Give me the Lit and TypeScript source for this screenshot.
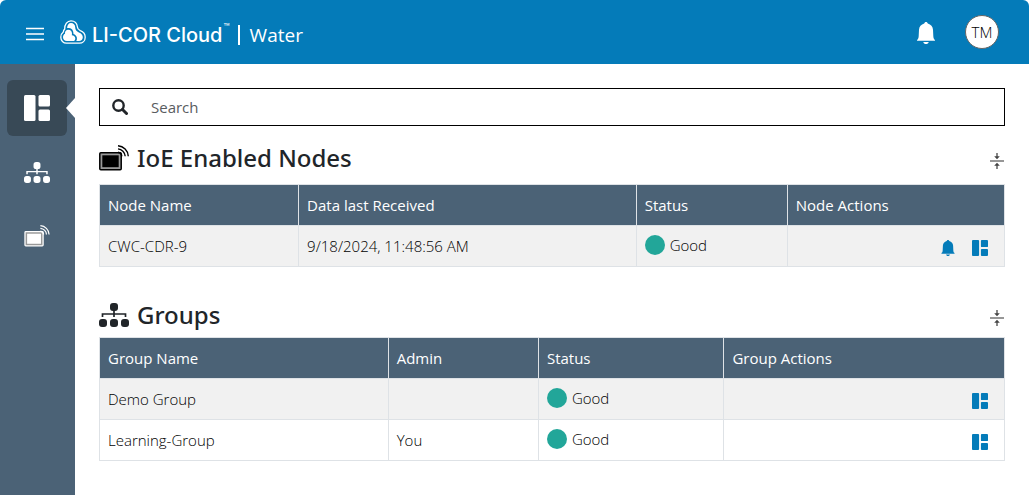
import { LitElement, html, css, svg, nothing, TemplateResult } from "lit";
import { customElement, property } from "lit/decorators.js";

type IconName = "menu" | "bell" | "dashboard" | "sitemap" | "device" | "search" | "collapse" | "cloud";

const shapes: Record<IconName, { box: string; body: TemplateResult }> = {
  menu: {
    box: "0 0 18 14",
    body: svg`<path d="M0 1.500h18M0 7h18M0 12.500h18" fill="none" stroke="currentColor" stroke-width="1.400"/>`,
  },
  bell: {
    box: "0 0 18 22",
    body: svg`<path fill="currentColor" d="M9 0c.9 0 1.600.600 1.800 1.500 3.100.8 5 3.200 5.200 6.200l.3 6.300c.1 1.900.500 3 1.300 3.700.3.200.4.500.4.800v.3H0v-.3c0-.3.1-.600.4-.8.8-.7 1.200-1.800 1.300-3.700l.3-6.300c.2-3 2.100-5.400 5.200-6.200C7.400.600 8.100 0 9 0zM6.300 19.900h5.400c-.3 1.300-1.300 2.100-2.700 2.100s-2.400-.8-2.700-2.100z"/>`,
  },
  dashboard: {
    box: "0 0 26 26",
    body: svg`<g fill="currentColor"><rect width="11.500" height="26" rx="1.500"/><rect x="14.500" width="11.500" height="11.500" rx="1.500"/><rect x="14.500" y="14.500" width="11.500" height="11.500" rx="1.500"/></g>`,
  },
  sitemap: {
    box: "0 0 30 24",
    body: svg`<g fill="currentColor"><rect x="11" y="0" width="8" height="8" rx="3"/><rect x="0" y="16" width="8" height="8" rx="3"/><rect x="11" y="16" width="8" height="8" rx="3"/><rect x="22" y="16" width="8" height="8" rx="3"/></g><path d="M15 7v7M3.500 14v-3h23v3" fill="none" stroke="currentColor" stroke-width="1.700"/>`,
  },
  device: {
    box: "0 0 30 26",
    body: svg`<rect x=".8" y="7.800" width="21.400" height="16.900" rx="1" fill="var(--bezel)" stroke="currentColor" stroke-width="1.500"/><rect x="3.300" y="10.300" width="16.400" height="11.900" fill="currentColor"/><path d="M19 7.200a4.500 4.500 0 0 1 3.800 4M19 3.900a8 8 0 0 1 7.200 7.300M19 .8a11 11 0 0 1 10.300 10.400" fill="none" stroke="currentColor" stroke-width="1.400"/>`,
  },
  search: {
    box: "0 0 16 16",
    body: svg`<circle cx="6.500" cy="6.500" r="5.200" fill="none" stroke="currentColor" stroke-width="2.400"/><path d="M10.500 10.500l4 4" stroke="currentColor" stroke-width="3" stroke-linecap="round"/>`,
  },
  collapse: {
    box: "0 0 14 16",
    body: svg`<path d="M0 8h14" stroke="#8c8c8c" stroke-width="1.800"/><path d="M7 0v4M7 16v-4" stroke="#555" stroke-width="1.400"/><path d="M4.200 3.300h5.600L7 6.300zM4.200 12.700h5.600L7 9.700z" fill="#444"/>`,
  },
  cloud: {
    box: "0 0 26 24",
    body: svg`<path d="M6.500 23.200C3.300 23.200.8 20.600.8 17.200c0-2.200.9-4 2.500-5.200.1-1.500.7-2.300 1.400-3C4.500 4.200 7.300.8 11 .8c3.600 0 6.200 2.500 6.400 6.200.1 1.900 1.100 2.900 2.900 3.700 3 1.200 4.900 3.400 4.900 6.500 0 3.500-2.500 6-5.900 6z" fill="none" stroke="currentColor" stroke-width="1.300"/><path fill="currentColor" d="M11 3.100c2.400 0 4.200 1.700 4.200 4.100 0 2.600 1.400 4.200 3.700 5.200 2.500 1 3.900 2.600 3.900 4.800 0 2.300-1.600 3.800-3.800 3.800h-2.700c.6-1 .8-2 .6-3.200-.3-2-1.600-3.200-3.400-3.900.1-3.300-1.600-5.600-4.400-5.900-.9-.1-1.400 0-2 .1.200-3 1.500-5 3.900-5z"/><path fill="currentColor" d="M8.200 9.800c2.300 0 3.800 1.500 3.800 3.900 0 .5-.1 1-.2 1.500 2 .1 3.500 1.300 3.500 3.200 0 1.200-.6 2.200-1.500 2.700H7c-2.400 0-4-1.600-4-3.900 0-1.600.7-2.800 2-3.500-.3-2.200 1.100-3.900 3.200-3.900z"/>`,
  },
};

@customElement("ui-icon")
export class UiIcon extends LitElement {
  static styles = css`
    :host { display: inline-block; flex: none; --bezel: #999; }
    .glyph { display: block; width: 100%; height: 100%; }
  `;
  @property() name: IconName = "menu";
  render() {
    const s = shapes[this.name];
    return html`<svg class="glyph" viewBox=${s.box} aria-hidden="true">${s.body}</svg>`;
  }
}

interface Column { label: string; share: number; }
type Cell = string | { status: string } | { actions: ("bell" | "dashboard")[] };

@customElement("data-section")
export class DataSection extends LitElement {
  static styles = css`
    :host { display: block; }
    .head { display: flex; align-items: center; gap: 8px; height: 36px; color: #212529; }
    .title { flex: 1; margin: 0; font: 500 24px/32px "Noto Sans", sans-serif; }
    .device { width: 30px; height: 26px; color: #000; }
    .sitemap { width: 30px; height: 24px; }
    button { border: 0; padding: 0; background: none; color: inherit; font: inherit; cursor: pointer; display: flex; }
    .collapse { width: 14px; height: 16px; margin: 6px 1px 0 0; }
    .table { width: 100%; table-layout: fixed; border-collapse: collapse; margin-top: 4px; }
    .head-device { padding-bottom: 4px; }
    th, td { border: 1px solid #dee2e6; padding: 8px; height: 24px; line-height: 24px; text-align: left; box-sizing: content-box; }
    th { background: #4b6276; color: #fff; font-weight: 400; }
    td { color: #000; font-weight: 350; }
    tbody tr:nth-child(odd) { background: #f1f1f1; }
    .status { display: flex; align-items: center; gap: 5px; height: 22px; margin-bottom: 2px; }
    .dot { width: 20px; height: 20px; border-radius: 50%; background: #22a699; }
    .actions { display: flex; justify-content: flex-end; gap: 16px; padding: 3px 8px 0 0; color: #047bb9; }
    .act { width: 16px; height: 16px; }
  `;
  @property() heading = "";
  @property() icon: "device" | "sitemap" = "device";
  @property({ attribute: false }) columns: Column[] = [];
  @property({ attribute: false }) rows: Cell[][] = [];

  private cell(c: Cell) {
    if (typeof c === "string") return c || nothing;
    if ("status" in c) return html`<div class="status"><span class="dot"></span>${c.status}</div>`;
    return html`<div class="actions">
      ${c.actions.map((a) => html`<button aria-label=${a === "bell" ? "Alerts" : "Dashboard"}><ui-icon class="act" name=${a}></ui-icon></button>`)}
    </div>`;
  }

  render() {
    return html`
      <div class="head head-${this.icon}">
        <ui-icon class=${this.icon} name=${this.icon}></ui-icon>
        <h2 class="title">${this.heading}</h2>
        <button aria-label="Collapse"><ui-icon class="collapse" name="collapse"></ui-icon></button>
      </div>
      <table class="table">
        <colgroup>${this.columns.map((c) => html`<col style="width:${c.share}%">`)}</colgroup>
        <thead><tr>${this.columns.map((c) => html`<th scope="col">${c.label}</th>`)}</tr></thead>
        <tbody>${this.rows.map((r) => html`<tr>${r.map((c) => html`<td>${this.cell(c)}</td>`)}</tr>`)}</tbody>
      </table>
    `;
  }
}

@customElement("app-root")
export class AppRoot extends LitElement {
  static styles = css`
    :host { display: flex; flex-direction: column; min-height: 100vh; background: #fff; color: #000; font: 400 15px/24px "Open Sans", "Noto Sans", sans-serif; }
    button { border: 0; padding: 0; background: none; color: inherit; font: inherit; cursor: pointer; display: flex; }
    .top { display: flex; align-items: center; height: 64px; padding: 0 30px 0 26px; box-sizing: border-box; background: #047bb9; color: #fff; border-radius: 6px 6px 0 0; }
    .menu { width: 18px; height: 14px; margin-top: 4px; }
    .brand { display: flex; align-items: center; flex: 1; margin-left: 16px; color: inherit; text-decoration: none; }
    .cloud { width: 26px; height: 24px; margin-right: 6px; }
    .name { font: 500 20px/24px Inter, sans-serif; margin-top: 6px; }
    .tm { font: 400 10px/8px Inter, sans-serif; align-self: flex-start; margin: 6px 0 0 1px; }
    .product { margin: 6px 0 0 8px; padding-left: 10px; border-left: 2px solid #fff; font-size: 19px; line-height: 20px; }
    .bell { width: 18px; height: 22px; margin: 2px 30px 0 0; }
    .avatar { width: 34px; height: 34px; border-radius: 50%; background: #fff; color: #000; align-items: center; justify-content: center; border: 1px solid #666; box-sizing: border-box; font-weight: 350; }
    .body { display: flex; flex: 1; }
    .side { display: flex; flex-direction: column; gap: 8px; width: 75px; padding: 16px 8px 16px 7px; box-sizing: border-box; background: #4b6276; }
    .link { position: relative; display: flex; align-items: center; justify-content: center; height: 56px; border-radius: 6px; color: #fff; }
    .active { background: #384956; }
    .active::after { content: ""; position: absolute; right: -8px; top: 18px; border: 10px solid transparent; border-left: 0; border-right: 9px solid #fff; }
    .nav-dashboard { width: 26px; height: 26px; }
    .nav-sitemap { width: 26px; height: 21px; }
    .nav-device { width: 26px; height: 22px; }
    .main { flex: 1; min-width: 0; padding: 24px; }
    .search { display: flex; align-items: center; height: 38px; box-sizing: border-box; border: 1px solid #000; padding: 0 12px; gap: 23px; color: #212529; margin-bottom: 14px; }
    .lens { width: 16px; height: 16px; }
    .field { flex: 1; min-width: 0; border: 0; outline: 0; padding: 0; background: none; font: inherit; color: #212529; }
    .field::placeholder { color: #595c5f; opacity: 1; }
    .groups { margin-top: 30px; }
  `;

  private nodeColumns: Column[] = [
    { label: "Node Name", share: 22 }, { label: "Data last Received", share: 37.3 },
    { label: "Status", share: 16.7 }, { label: "Node Actions", share: 24 },
  ];
  private nodes: Cell[][] = [["CWC-CDR-9", "9/18/2024, 11:48:56 AM", { status: "Good" }, { actions: ["bell", "dashboard"] }]];
  private groupColumns: Column[] = [
    { label: "Group Name", share: 31.9 }, { label: "Admin", share: 16.6 },
    { label: "Status", share: 20.5 }, { label: "Group Actions", share: 31 },
  ];
  private groups: Cell[][] = [
    ["Demo Group", "", { status: "Good" }, { actions: ["dashboard"] }],
    ["Learning-Group", "You", { status: "Good" }, { actions: ["dashboard"] }],
  ];

  render() {
    return html`
      <header class="top">
        <button aria-label="Menu"><ui-icon class="menu" name="menu"></ui-icon></button>
        <a class="brand" href="#">
          <ui-icon class="cloud" name="cloud"></ui-icon>
          <span class="name">LI-COR Cloud</span><span class="tm">™</span>
          <span class="product">Water</span>
        </a>
        <button aria-label="Notifications"><ui-icon class="bell" name="bell"></ui-icon></button>
        <button class="avatar">TM</button>
      </header>
      <div class="body">
        <nav class="side">
          <a class="link active" href="#" aria-label="Dashboard"><ui-icon class="nav-dashboard" name="dashboard"></ui-icon></a>
          <a class="link" href="#" aria-label="Groups"><ui-icon class="nav-sitemap" name="sitemap"></ui-icon></a>
          <a class="link" href="#" aria-label="Nodes"><ui-icon class="nav-device" name="device"></ui-icon></a>
        </nav>
        <main class="main">
          <label class="search">
            <ui-icon class="lens" name="search"></ui-icon>
            <input class="field" type="text" placeholder="Search" aria-label="Search">
          </label>
          <data-section heading="IoE Enabled Nodes" icon="device" .columns=${this.nodeColumns} .rows=${this.nodes}></data-section>
          <data-section class="groups" heading="Groups" icon="sitemap" .columns=${this.groupColumns} .rows=${this.groups}></data-section>
        </main>
      </div>
    `;
  }
}
